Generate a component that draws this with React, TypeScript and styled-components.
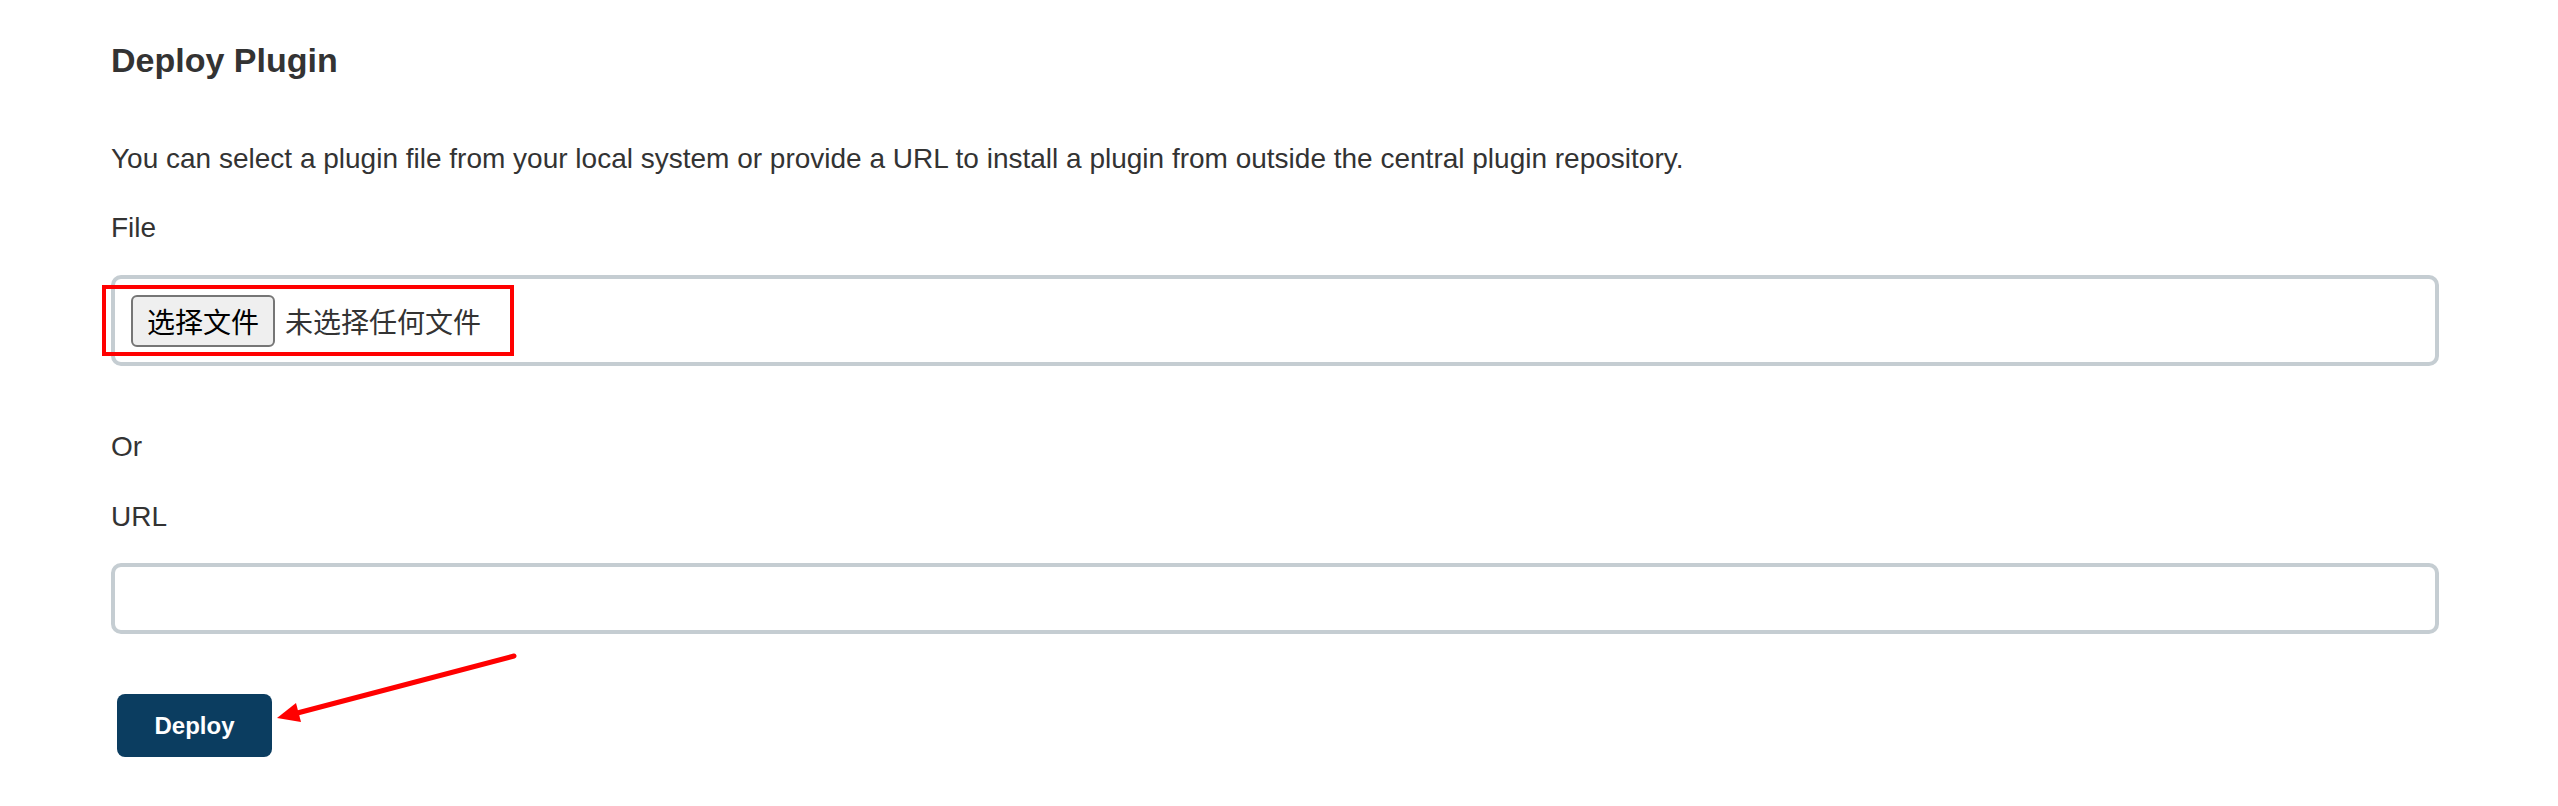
import React from "react";
import styled, { createGlobalStyle } from "styled-components";

const GlobalStyle = createGlobalStyle`
  body {
    margin: 0;
    background: #ffffff;
    font-family: "Liberation Sans", Arial, "Noto Sans CJK SC", sans-serif;
    color: #333333;
  }
`;

const Page = styled.div`
  position: relative;
  width: 2558px;
  height: 806px;
  box-sizing: border-box;
  padding: 40px 119px 0 111px;
  overflow: hidden;
`;

const Title = styled.h1`
  margin: 0;
  font-size: 34px;
  line-height: 41px;
  font-weight: 700;
  color: #333333;
`;

const Text = styled.p<{ $top: number }>`
  margin: ${(p) => p.$top}px 0 0 0;
  font-size: 28px;
  line-height: 42px;
  color: #333333;
`;

const Field = styled.div<{ $top: number; $height: number }>`
  margin-top: ${(p) => p.$top}px;
  height: ${(p) => p.$height}px;
  box-sizing: border-box;
  border: 4px solid #c5cdd2;
  border-radius: 10px;
  background: #ffffff;
  display: flex;
  align-items: center;
  padding: 0 16px;
`;

const PickButton = styled.button`
  height: 52px;
  box-sizing: border-box;
  padding: 0 14px;
  border: 2px solid #767676;
  border-radius: 6px;
  background: #efefef;
  color: #000000;
  font-family: "Noto Sans CJK SC", sans-serif;
  font-size: 28px;
  line-height: 1;
`;

const PickStatus = styled.span`
  margin-left: 10px;
  font-family: "Noto Sans CJK SC", sans-serif;
  font-size: 28px;
  color: #333333;
`;

const DeployButton = styled.button`
  margin-top: 60px;
  margin-left: 6px;
  width: 155px;
  height: 63px;
  border: none;
  border-radius: 8px;
  background: #0b3d60;
  color: #ffffff;
  font-family: "Liberation Sans", Arial, sans-serif;
  font-size: 24px;
  font-weight: 700;
  display: block;
`;

const Notes = styled.svg`
  position: absolute;
  left: 0;
  top: 0;
  pointer-events: none;
`;

export default function App() {
  return (
    <>
      <GlobalStyle />
      <Page>
        <Title>Deploy Plugin</Title>
        <Text $top={57}>
          You can select a plugin file from your local system or provide a URL to install a plugin from outside the central plugin repository.
        </Text>
        <Text $top={27}>File</Text>
        <Field $top={26} $height={91}>
          <PickButton>选择文件</PickButton>
          <PickStatus>未选择任何文件</PickStatus>
        </Field>
        <Text $top={60}>Or</Text>
        <Text $top={28}>URL</Text>
        <Field $top={25} $height={71} />
        <DeployButton>Deploy</DeployButton>

        {/* red annotations drawn over the page */}
        <Notes width="2558" height="806" viewBox="0 0 2558 806">
          <rect x="104" y="287" width="408" height="67" fill="none" stroke="#ff0000" strokeWidth="4" />
          <line x1="514" y1="656" x2="286" y2="716" stroke="#ff0000" strokeWidth="5" strokeLinecap="round" />
          <polygon points="277,718 296,703 301,722" fill="#ff0000" />
        </Notes>
      </Page>
    </>
  );
}
